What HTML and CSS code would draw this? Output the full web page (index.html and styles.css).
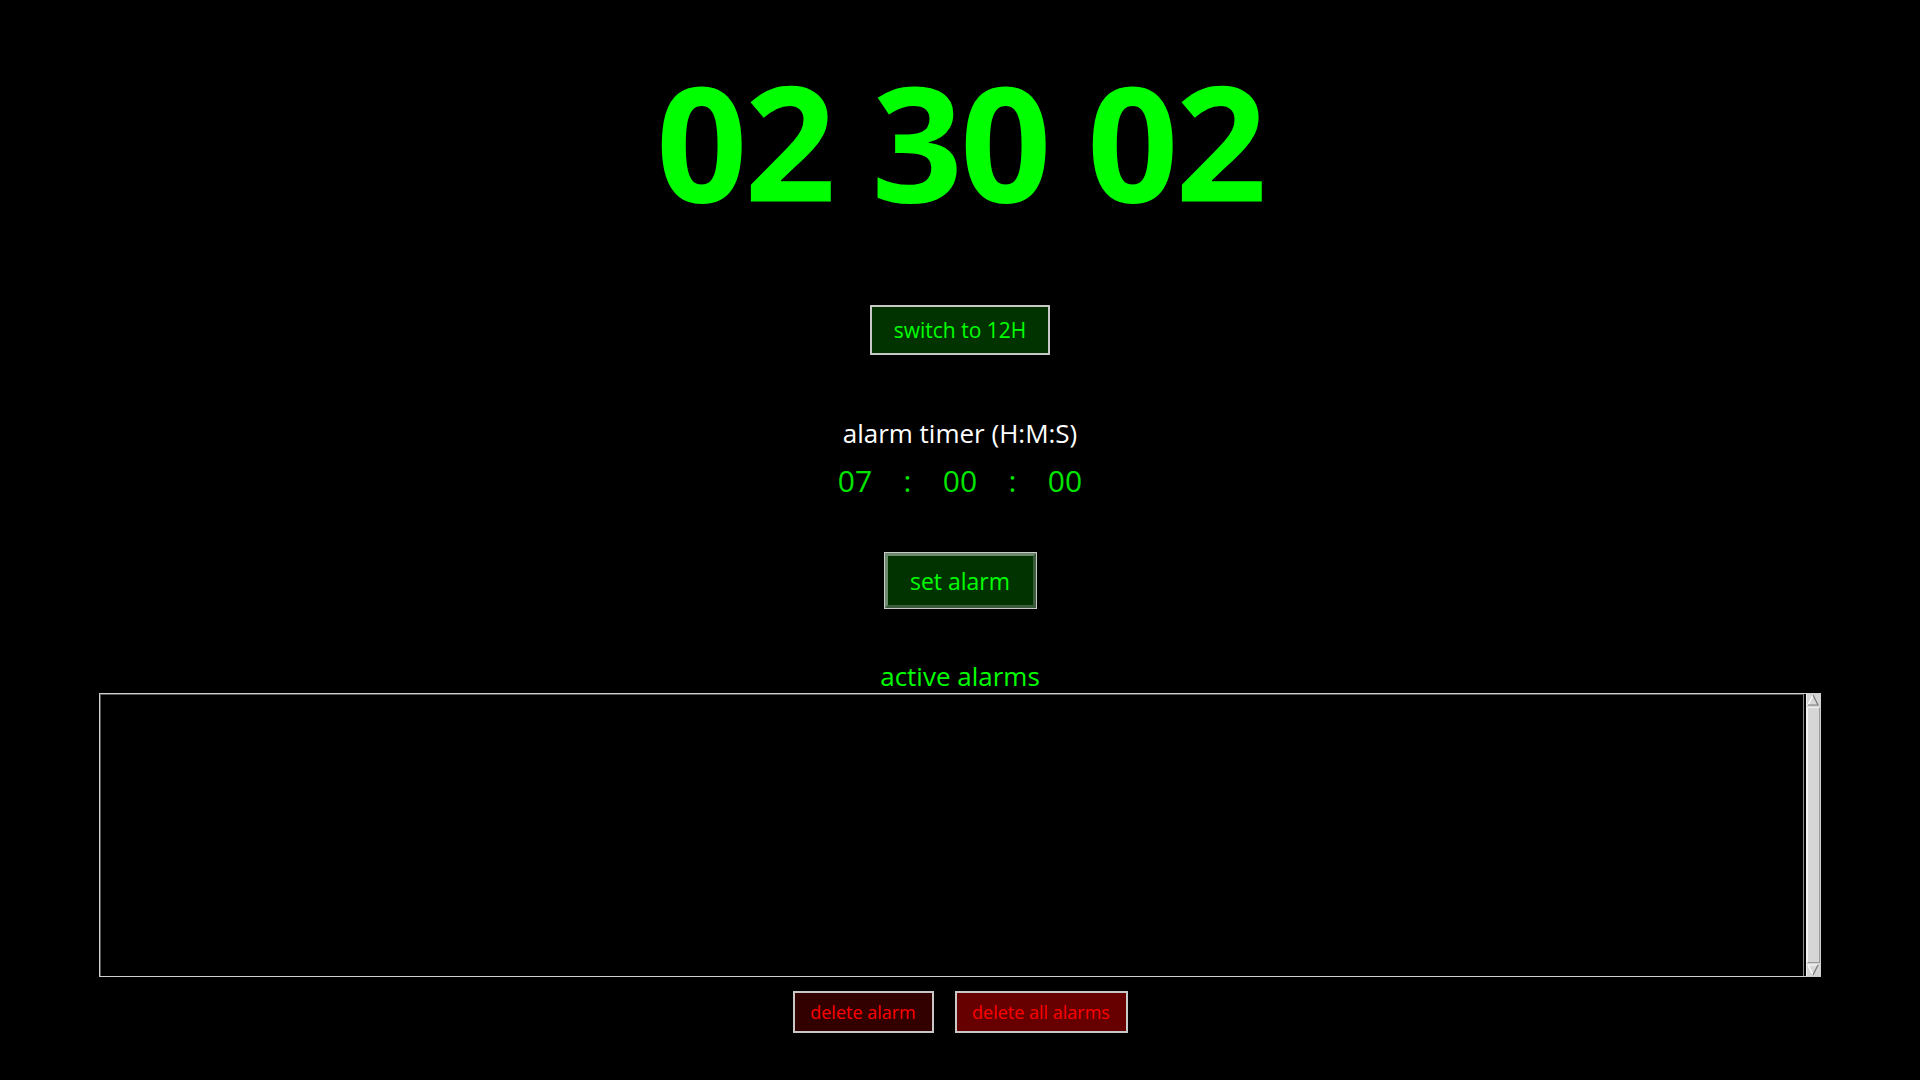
FILE: index.html
```html
<!DOCTYPE html>
<html lang="en">
<head>
<meta charset="utf-8">
<title>Alarm Clock</title>
<link rel="stylesheet" href="styles.css">
</head>
<body>
<main class="app">
  <div class="clock">02 30 02</div>
  <button class="btn btn-toggle">switch to 12H</button>
  <div class="alarm-label">alarm timer (H:M:S)</div>
  <div class="alarm-inputs">
    <input class="time-field" type="text" value="07">
    <span class="sep">:</span>
    <input class="time-field" type="text" value="00">
    <span class="sep">:</span>
    <input class="time-field" type="text" value="00">
  </div>
  <button class="btn btn-set">set alarm</button>
  <div class="list-title">active alarms</div>
  <div class="alarm-list">
    <div class="list-body"></div>
    <div class="scrollbar">
      <svg class="arrow" viewBox="0 0 12 12" width="12" height="12">
        <polygon points="6,1 11,11 1,11" fill="#d8d8d8"/>
        <polyline points="1,11 6,1" fill="none" stroke="#ffffff" stroke-width="1.2"/>
        <polyline points="6,1 11,11 1,11" fill="none" stroke="#7a7a7a" stroke-width="1.2"/>
      </svg>
      <div class="track"></div>
      <svg class="arrow" viewBox="0 0 12 12" width="12" height="12">
        <polygon points="1,1 11,1 6,11" fill="#d8d8d8"/>
        <polyline points="6,11 1,1 11,1" fill="none" stroke="#ffffff" stroke-width="1.2"/>
        <polyline points="11,1 6,11" fill="none" stroke="#7a7a7a" stroke-width="1.2"/>
      </svg>
    </div>
  </div>
  <div class="actions">
    <button class="btn btn-del">delete alarm</button>
    <button class="btn btn-del btn-del-all">delete all alarms</button>
  </div>
</main>
</body>
</html>
```
FILE: styles.css
```css
html, body {
  margin: 0;
  padding: 0;
  background: #000;
  height: 100%;
}
body {
  font-family: "Open Sans", "Noto Sans", sans-serif;
  color: #fff;
}
.app {
  display: flex;
  flex-direction: column;
  align-items: center;
  padding-top: 60px;
}
.clock {
  font-family: "Open Sans", sans-serif;
  font-weight: 700;
  font-size: 160px;
  line-height: 160px;
  color: #00ff00;
  letter-spacing: -3px;
  white-space: pre;
}
.btn {
  font-family: "Open Sans", sans-serif;
  cursor: pointer;
  padding: 0;
}
.btn-toggle {
  margin-top: 85px;
  width: 180px;
  height: 50px;
  background: #003300;
  color: #00ff00;
  border: 2px solid #c8c8c8;
  font-size: 21px;
}
.alarm-label {
  margin-top: 61px;
  font-size: 26px;
  line-height: 34px;
  color: #fff;
}
.alarm-inputs {
  display: flex;
  align-items: center;
  margin-top: 11px;
}
.time-field {
  width: 70px;
  height: 40px;
  background: transparent;
  border: none;
  outline: none;
  color: #00e600;
  font-family: "Open Sans", sans-serif;
  font-size: 30px;
  line-height: 40px;
  text-align: center;
  padding: 0;
}
.sep {
  color: #00e600;
  font-size: 30px;
  line-height: 40px;
  width: 35px;
  text-align: center;
}
.btn-set {
  margin-top: 51px;
  width: 153px;
  height: 57px;
  background: #003300;
  color: #00ff00;
  border: 4px solid;
  border-color: #6e8a6e #3c5a3c #3c5a3c #6e8a6e;
  outline: 1px solid #c8c8c8;
  outline-offset: -1px;
  font-size: 23px;
}
.list-title {
  margin-top: 50px;
  font-size: 26px;
  line-height: 34px;
  color: #00ff00;
}
.alarm-list {
  width: 1722px;
  height: 284px;
  box-sizing: border-box;
  border: 1px solid #d0d0d0;
  display: flex;
  background: #000;
}
.list-body {
  flex: 1;
  border-top: 1px solid #555;
  border-left: 1px solid #555;
  border-right: 1px solid #888;
}
.scrollbar {
  width: 13px;
  margin-left: 2px;
  background: #d4d4d4;
  border-left: 1px solid #eeeeee;
  display: flex;
  flex-direction: column;
}
.track {
  flex: 1;
  background: #d6d6d6;
  border-left: 1px solid #f2f2f2;
  border-right: 1px solid #9a9a9a;
  border-top: 1px solid #f2f2f2;
  border-bottom: 1px solid #9a9a9a;
  margin: 1px 0;
}
.arrow {
  display: block;
  flex: none;
}
.actions {
  display: flex;
  gap: 21px;
  margin-top: 14px;
}
.btn-del {
  height: 42px;
  width: 141px;
  color: #ff0000;
  background: #330000;
  border: 2px solid #c8c8c8;
  font-size: 18px;
}
.btn-del-all {
  width: 173px;
  background: #660000;
}
```
